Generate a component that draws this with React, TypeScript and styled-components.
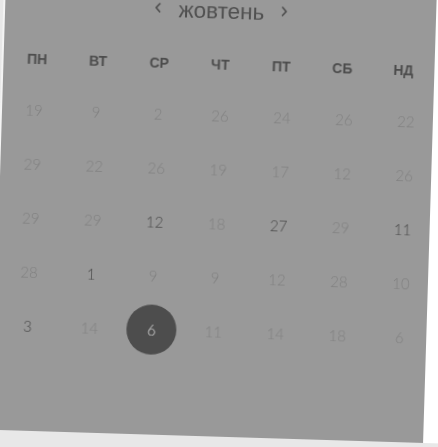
import React from 'react';
import styled, { createGlobalStyle } from 'styled-components';

type DayState = 'muted' | 'active' | 'selected';

interface Day {
  value: number;
  state?: DayState;
}

const GlobalStyle = createGlobalStyle`
  html, body {
    margin: 0;
    padding: 0;
    width: 438px;
    height: 447px;
    overflow: hidden;
    background-color: #e8e8e8;
  }
`;

const Card = styled.div`
  width: 430.5px;
  height: 450px;
  margin: -20px 0 0 5.6px;
  padding: 0 0 0 3px;
  box-sizing: border-box;
  background-color: #999;
  box-shadow: 30px 0 0 #fff, -2px 0 0 #f4f4f4;
  transform-origin: 0 0;
  transform: rotate(1.75deg);
  filter: blur(0.35px);
  color: #4c4c4c;
`;

const Header = styled.div`
  display: flex;
  align-items: center;
  justify-content: center;
  gap: 16px;
  height: 45px;
  margin-right: 1px;
`;

const Title = styled.span`
  font-family: "Liberation Sans", Arial, sans-serif;
  font-size: 22.5px;
  line-height: 20px;
  color: #505050;
  position: relative;
  top: 2px;
`;

const Arrow = styled.svg`
  width: 8px;
  height: 12px;
  fill: none;
  stroke: #4c4c4c;
  stroke-width: 1.6;
`;

const Weekdays = styled.div`
  display: grid;
  grid-template-columns: repeat(7, 1fr);
  height: 50px;
  margin-top: 7px;
  padding-top: 2px;
  box-sizing: border-box;
`;

const Weekday = styled.div`
  display: flex;
  align-items: center;
  justify-content: center;
  font-family: "Liberation Sans", Arial, sans-serif;
  font-size: 14px;
  font-weight: 700;
  color: #4c4c4c;
`;

const DaysGrid = styled.div`
  display: grid;
  grid-template-columns: repeat(7, 62px);
  grid-auto-rows: 54px;
  margin-left: -2px;
`;

const DayCell = styled.div`
  display: flex;
  align-items: center;
  justify-content: center;
`;

const DayMark = styled.span<{ $state: DayState }>`
  display: flex;
  align-items: center;
  justify-content: center;
  width: 50px;
  height: 50px;
  border-radius: 50%;
  font-family: Lato, "Noto Sans", sans-serif;
  font-size: 15px;
  font-weight: 300;
  background-color: ${({ $state }) => ($state === 'selected' ? '#4d4d4d' : 'transparent')};
  color: ${({ $state }) =>
    $state === 'selected' ? '#d8d8d8' : $state === 'active' ? '#484848' : '#818181'};
`;

const weekdays = ['ПН', 'ВТ', 'СР', 'ЧТ', 'ПТ', 'СБ', 'НД'];

const days: Day[] = [
  { value: 19 }, { value: 9 }, { value: 2 }, { value: 26 }, { value: 24 }, { value: 26 }, { value: 22 },
  { value: 29 }, { value: 22 }, { value: 26 }, { value: 19 }, { value: 17 }, { value: 12 }, { value: 26 },
  { value: 29 }, { value: 29 }, { value: 12, state: 'active' }, { value: 18 }, { value: 27, state: 'active' }, { value: 29 }, { value: 11, state: 'active' },
  { value: 28 }, { value: 1, state: 'active' }, { value: 9 }, { value: 9 }, { value: 12 }, { value: 28 }, { value: 10 },
  { value: 3, state: 'active' }, { value: 14 }, { value: 6, state: 'selected' }, { value: 11 }, { value: 14 }, { value: 18 }, { value: 6 },
];

const App = () => {
  return (
    <>
      <GlobalStyle />
      <Card>
        <Header>
          <Arrow viewBox="0 0 8 12">
            <path d="M6 1.5 L2 6 L6 10.5" />
          </Arrow>
          <Title>жовтень</Title>
          <Arrow viewBox="0 0 8 12">
            <path d="M2 1.5 L6 6 L2 10.5" />
          </Arrow>
        </Header>
        <Weekdays>
          {weekdays.map((name) => (
            <Weekday key={name}>{name}</Weekday>
          ))}
        </Weekdays>
        <DaysGrid>
          {days.map((day, i) => (
            <DayCell key={i}>
              <DayMark $state={day.state ?? 'muted'}>{day.value}</DayMark>
            </DayCell>
          ))}
        </DaysGrid>
      </Card>
    </>
  );
};

export default App;
